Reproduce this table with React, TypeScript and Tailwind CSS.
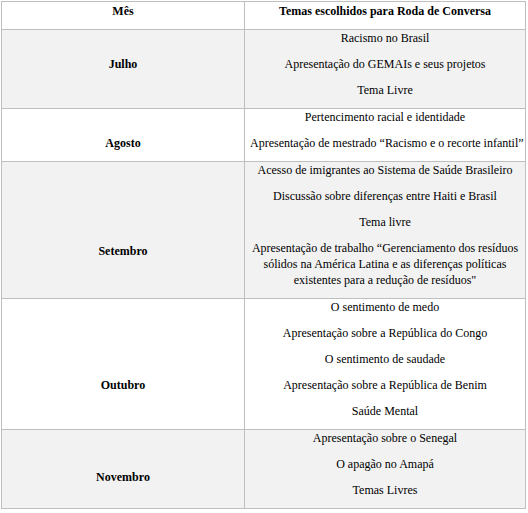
import type { ReactNode } from "react";

type Row = {
  month: string;
  monthCell: string;
  rowBg: string;
  topics: ReactNode[];
};

const rows: Row[] = [
  {
    month: "Julho",
    monthCell: "border border-[#bfbfbf] px-[5px] pt-0 text-center align-middle font-bold",
    rowBg: "bg-[#f2f2f2]",
    topics: ["Racismo no Brasil", "Apresentação do GEMAIs e seus projetos", "Tema Livre"],
  },
  {
    month: "Agosto",
    monthCell: "border border-[#bfbfbf] px-[5px] pt-[26px] text-center align-middle font-bold",
    rowBg: "bg-white",
    topics: [
      "Pertencimento racial e identidade",
      "Apresentação de mestrado “Racismo e o recorte infantil”",
    ],
  },
  {
    month: "Setembro",
    monthCell: "border border-[#bfbfbf] px-[5px] pt-[52px] text-center align-middle font-bold",
    rowBg: "bg-[#f2f2f2]",
    topics: [
      "Acesso de imigrantes ao Sistema de Saúde Brasileiro",
      "Discussão sobre diferenças entre Haiti e Brasil",
      "Tema livre",
      <>
        Apresentação de trabalho “Gerenciamento dos resíduos
        <br />
        sólidos na América Latina e as diferenças políticas
        <br />
        existentes para a redução de resíduos&quot;
      </>,
    ],
  },
  {
    month: "Outubro",
    monthCell: "border border-[#bfbfbf] px-[5px] pt-[52px] text-center align-middle font-bold",
    rowBg: "bg-white",
    topics: [
      "O sentimento de medo",
      "Apresentação sobre a República do Congo",
      "O sentimento de saudade",
      "Apresentação sobre a República de Benim",
      "Saúde Mental",
    ],
  },
  {
    month: "Novembro",
    monthCell: "border border-[#bfbfbf] px-[5px] pt-[26px] text-center align-middle font-bold",
    rowBg: "bg-[#f2f2f2]",
    topics: ["Apresentação sobre o Senegal", "O apagão no Amapá", "Temas Livres"],
  },
];

export default function App() {
  return (
    <div className="h-[513px] w-[528px] bg-white pl-px pt-px font-serif [font-family:'Liberation_Serif',serif] text-[12px] leading-[16px] text-black">
      <table className="w-[525px] table-fixed border-collapse font-['Liberation_Serif']">
        <colgroup>
          <col className="w-[243px]" />
          <col />
        </colgroup>
        <thead>
          <tr>
            <th className="border border-[#bfbfbf] px-[5px] pt-px align-top font-bold">
              <p className="mb-[10px]">Mês</p>
            </th>
            <th className="border border-[#bfbfbf] px-[5px] pt-px align-top font-bold">
              <p className="mb-[10px]">Temas escolhidos para Roda de Conversa</p>
            </th>
          </tr>
        </thead>
        <tbody>
          {rows.map((r) => (
            <tr key={r.month} className={r.rowBg}>
              <td className={r.monthCell}>
                <p className="mb-[10px]">{r.month}</p>
              </td>
              <td className="border border-[#bfbfbf] px-[5px] text-center align-top">
                {r.topics.map((t, i) => (
                  <p key={i} className="mb-[10px] whitespace-nowrap">
                    {t}
                  </p>
                ))}
              </td>
            </tr>
          ))}
        </tbody>
      </table>
    </div>
  );
}
